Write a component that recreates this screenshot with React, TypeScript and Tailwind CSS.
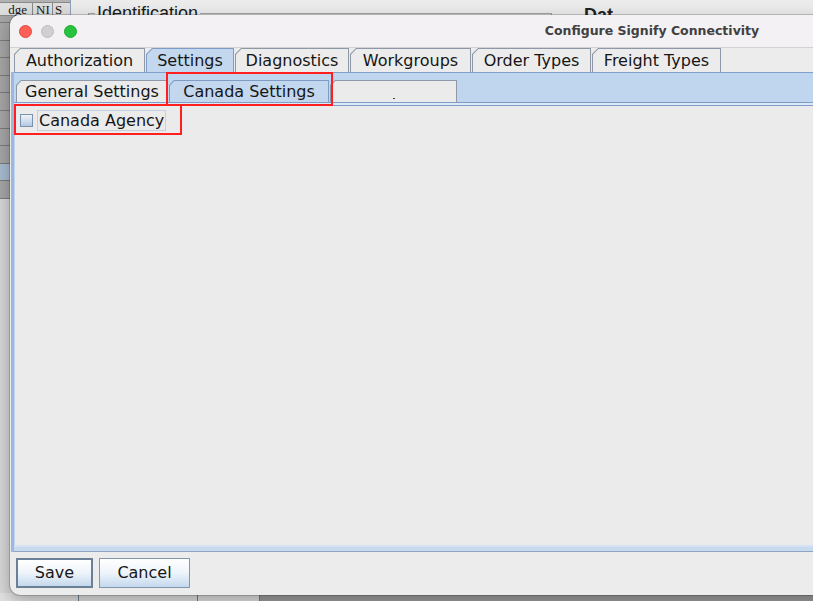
import React from "react";

const outerTabs = [
  { label: "Authorization", w: "w-[131px]", selected: false },
  { label: "Settings", w: "w-[88px]", selected: true },
  { label: "Diagnostics", w: "w-[114px]", selected: false },
  { label: "Workgroups", w: "w-[121px]", selected: false },
  { label: "Order Types", w: "w-[119px]", selected: false },
  { label: "Freight Types", w: "w-[129px]", selected: false },
];

const innerTabs = [
  { label: "General Settings", w: "w-[152px]", selected: false },
  { label: "Canada Settings", w: "w-[160px]", selected: true },
  { label: "", w: "w-[127px]", selected: false },
];

const tableRows = [0, 1, 2, 3, 4, 5, 6, 7, 8, 9];

function OuterTab({ label, w, selected }: { label: string; w: string; selected: boolean }) {
  return (
    <div
      className={`${w} h-[24px] pt-[1px] px-[1px] [clip-path:polygon(6px_0,100%_0,100%_100%,0_100%,0_6px)] ${
        selected ? "bg-[#7f9cc4]" : "bg-[#8e98a6]"
      }`}
    >
      <div
        className={`h-full flex items-center justify-center [clip-path:polygon(5.4px_0,100%_0,100%_100%,0_100%,0_5.4px)] ${
          selected ? "bg-[#c3d8ee]" : "bg-[#ececec]"
        }`}
      >
        {label}
      </div>
    </div>
  );
}

function InnerTab({ label, w, selected }: { label: string; w: string; selected: boolean }) {
  return (
    <div
      className={`${w} h-[22px] pt-[1px] px-[1px] [clip-path:polygon(5px_0,100%_0,100%_100%,0_100%,0_5px)] ${
        selected ? "bg-[#7f9cc4]" : "bg-[#8e98a6]"
      }`}
    >
      <div
        className={`h-full flex items-center justify-center [clip-path:polygon(4.4px_0,100%_0,100%_100%,0_100%,0_4.4px)] ${
          selected ? "bg-[#c3d8ee]" : "bg-[#ebebeb]"
        }`}
      >
        {label || <span className="mt-[14px] w-[2px] h-[1px] bg-[#444]" />}
      </div>
    </div>
  );
}

export default function App() {
  return (
    <div className="relative w-[813px] h-[601px] overflow-hidden bg-[#ececec] font-['DejaVu_Sans',sans-serif] text-[16px] text-[#161616]">
      {/* app behind: table on the left */}
      <div className="absolute left-0 top-0 w-[71px] h-[601px] flex flex-col bg-[#d9d9d9] border-r border-[#8da3bd]">
        <div className="h-[3px] bg-[#b2b2b2] border-b border-[#8a8a8a]" />
        <div className="h-[13px] flex bg-[#dedede] border-b border-[#8a8a8a] font-['Liberation_Serif',serif] text-[13px] leading-[13px]">
          <div className="w-[33px] border-r border-[#8a8a8a] text-right pr-[5px]">dge</div>
          <div className="w-[20px] border-r border-[#8a8a8a] pl-[3px]">NI</div>
          <div className="flex-1 pl-[2px]">S</div>
        </div>
        <div className="h-[7px] bg-[#a6a6a6] border-b border-[#7c7c7c]" />
        {tableRows.map((i) => (
          <div
            key={i}
            className={`h-[17.6px] border-b border-[#7c7c7c] ${i === 8 ? "bg-[#a9bdd1]" : "bg-[#a6a6a6]"}`}
          />
        ))}
        <div className="flex-1 bg-[#d8d8d8]" />
      </div>

      {/* app behind: identification panel */}
      <div className="absolute left-[88px] top-[13px] w-[464px] h-[100px] border border-[#a4a4a4]" />
      <div className="absolute left-[95px] top-[3px] h-[12px] overflow-hidden px-[2px] bg-[#ececec]">
        <div className="font-['Liberation_Sans',sans-serif] text-[18px] leading-[20px] text-[#1c1c1c]">Identification</div>
      </div>
      <div className="absolute left-[584px] top-[7px] h-[8px] overflow-hidden">
        <div className="font-['Liberation_Sans',sans-serif] font-bold text-[18px] leading-[16px] text-[#222]">Dat</div>
      </div>

      {/* app behind: bottom strip */}
      <div className="absolute left-0 top-[593px] w-[813px] h-[8px] flex">
        <div className="w-[78px] bg-[#e3e3e3]" />
        <div className="w-[120px] bg-[#e0e0e0] border-t-2 border-x border-[#6f7f90]" />
        <div className="w-[62px] bg-[#e0e0e0] border-t-2 border-r border-[#6f7f90]" />
        <div className="flex-1 bg-[#9d9d9d]" />
      </div>

      {/* dialog window */}
      <div className="absolute left-[10px] top-[15px] w-[1284px] h-[580px] rounded-l-[10px] overflow-hidden bg-[#ececec] flex flex-col shadow-[0_0_0_1px_rgba(0,0,0,0.18),0_6px_18px_rgba(0,0,0,0.3)]">
        <div className="h-[33px] shrink-0 grid grid-cols-[1fr_auto_1fr] items-center bg-[#f4f1f4] border-b border-[#d2d0d2]">
          <div className="flex items-center gap-[9.5px] pl-[8.5px]">
            <span className="w-[13px] h-[13px] rounded-full bg-[#fe5f57] border border-[#e2463f]" />
            <span className="w-[13px] h-[13px] rounded-full bg-[#d1d0d1] border border-[#bdbcbd]" />
            <span className="w-[13px] h-[13px] rounded-full bg-[#27c33f] border border-[#1aab2e]" />
          </div>
          <div className="font-bold text-[12.5px] leading-[16px] text-[#404040]">Configure Signify Connectivity</div>
          <div />
        </div>

        <div className="h-[24px] shrink-0 flex items-end gap-[1px] pl-[4px]">
          {outerTabs.map((t) => (
            <OuterTab key={t.label} {...t} />
          ))}
        </div>

        <div className="flex-1 ml-[1px] flex flex-col border-l-[3px] border-[#9cb7e0]">
          <div className="h-[30px] shrink-0 flex items-end gap-[1px] pl-[2px] bg-[#bfd6ee] border-t border-[#7f9fcd]">
            {innerTabs.map((t, i) => (
              <InnerTab key={i} {...t} />
            ))}
          </div>
          <div className="h-[4px] shrink-0 bg-[#dce8f5] border-t border-b border-[#7f9dc8]" />
          <div className="flex-1 bg-[#ebebeb] border-l border-[#c4d6ee] pl-[5px] pt-[4px]">
            <div className="flex items-center gap-[4px]">
              <span className="w-[13px] h-[13px] border border-[#7c91ab] bg-gradient-to-b from-[#eef4fa] to-[#b3c9e2]" />
              <span className="h-[21px] px-[1px] flex items-center border border-[#c3d0dd]">Canada Agency</span>
            </div>
          </div>
          <div className="h-[7px] shrink-0 bg-[#c8daef] border-t-2 border-b border-t-[#d4e2f2] border-b-[#8ea4bf]" />
        </div>

        <div className="h-[43px] shrink-0 flex items-start gap-[6px] pl-[6px] pt-[6px]">
          <button className="w-[77px] h-[30px] border-2 border-[#6b7f96] bg-gradient-to-b from-white via-[#eef4fa] to-[#c4d8ed] font-medium">
            Save
          </button>
          <button className="w-[91px] h-[30px] border border-[#8296ad] bg-gradient-to-b from-white via-[#eef4fa] to-[#c4d8ed] font-medium">
            Cancel
          </button>
        </div>

        {/* annotation boxes */}
        <div className="absolute left-[156px] top-[57px] w-[167px] h-[34px] border-2 border-[#ff1f1f]" />
        <div className="absolute left-[4px] top-[89px] w-[168px] h-[31px] border-2 border-[#ff1f1f]" />
      </div>
    </div>
  );
}
